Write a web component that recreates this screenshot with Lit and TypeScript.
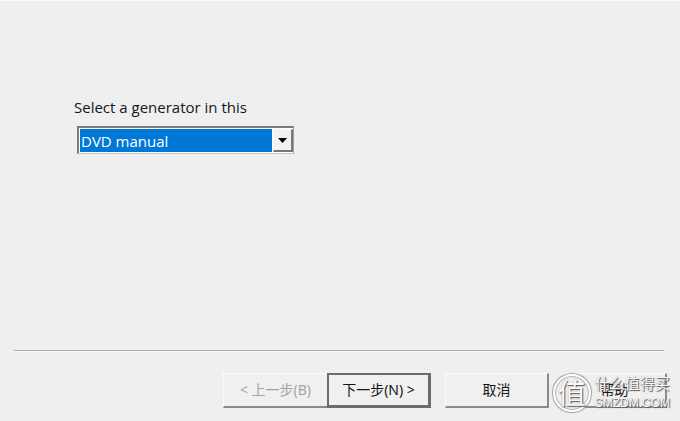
import { LitElement, html, css } from "lit";
import { customElement, state } from "lit/decorators.js";

@customElement("watermark-logo")
class WatermarkLogo extends LitElement {
  static styles = css`
    :host {
      display: flex;
      align-items: center;
      gap: 4px;
      pointer-events: none;
      color: #fafafa;
      font-family: "Noto Sans CJK SC", sans-serif;
      text-shadow: 1px 1px 1px #555, 0 0 1px #999;
    }
    .seal {
      display: flex;
      align-items: center;
      justify-content: center;
      box-sizing: border-box;
      width: 38px;
      height: 38px;
      padding-bottom: 2px;
      border: 2px solid #fdfdfd;
      border-radius: 50%;
      background: #eeeeee;
      box-shadow: 0 0 1px 1px #a0a0a0, inset 0 0 1px 1px #b0b0b0;
      font-size: 28px;
      line-height: 32px;
    }
    .words {
      display: flex;
      flex-direction: column;
    }
    .name {
      font-size: 15px;
      line-height: 20px;
    }
    .site {
      font-family: "Liberation Sans", sans-serif;
      font-size: 12px;
      line-height: 20px;
    }
  `;
  render() {
    return html`
      <span class="seal">值</span>
      <span class="words">
        <span class="name">什么值得买</span>
        <span class="site">SMZDM.COM</span>
      </span>
    `;
  }
}

@customElement("app-root")
class AppRoot extends LitElement {
  static styles = css`
    :host {
      display: flex;
      flex-direction: column;
      box-sizing: border-box;
      min-height: 100vh;
      padding: 0 13px 13px 14px;
      border-top: 1px solid #fbfbfb;
      background: #efefef;
      color: #161616;
      font-family: "Noto Sans", "Noto Sans CJK SC", sans-serif;
      font-size: 14px;
    }
    .content {
      flex: 1;
      display: flex;
      flex-direction: column;
      align-items: flex-start;
      gap: 9px;
      padding: 96px 60px 0;
      font-family: "Open Sans", "Noto Sans CJK SC", sans-serif;
      font-size: 15px;
    }
    label {
      line-height: 20px;
    }
    .combo {
      display: grid;
      grid-template-columns: 1fr 20px;
      box-sizing: border-box;
      width: 217px;
      height: 28px;
      margin-left: 3px;
      padding: 1px 0 1px 1px;
      border: 2px solid #7b7b7b;
      border-right: 1px solid #a0a0a0;
      border-bottom: 1px solid #c8c8c8;
      background: #fff;
    }
    select {
      grid-area: 1 / 1 / 2 / 3;
      appearance: none;
      min-width: 0;
      margin: 0;
      padding: 0 20px 0 1px;
      border: 0;
      border-radius: 0;
      outline: 0;
      background: linear-gradient(#0078d7, #0078d7) no-repeat 0 0 / calc(100% - 21px) 100%;
      color: #fff;
      font: inherit;
    }
    .arrow {
      grid-area: 1 / 2;
      display: flex;
      align-items: center;
      justify-content: center;
      pointer-events: none;
      border: 1px solid #f6f6f6;
      border-right: 2px solid #777;
      border-bottom: 2px solid #777;
      background: #f2f2f2;
    }
    .arrow svg {
      width: 9px;
      height: 5px;
    }
    hr {
      box-sizing: content-box;
      width: calc(100% - 3px);
      height: 1px;
      margin: 0 0 21px;
      border: 0;
      border-top: 1px solid #a6a6a6;
      background: #fafafa;
    }
    .actions {
      position: relative;
      display: flex;
      justify-content: flex-end;
      gap: 14px;
    }
    .pair {
      display: flex;
    }
    button {
      box-sizing: border-box;
      width: 104px;
      height: 35px;
      padding: 0;
      border: 1px solid #fbfbfb;
      border-right: 2px solid #8a8a8a;
      border-bottom: 2px solid #8a8a8a;
      border-radius: 0;
      background: #f0f0f0;
      color: #161616;
      font: inherit;
      line-height: 20px;
    }
    .back {
      border-right-width: 0;
    }
    button:disabled {
      color: #a4a4a4;
    }
    .next {
      border: 2px solid #6c6c6c;
      border-right-width: 3px;
      border-bottom-width: 3px;
    }
    watermark-logo {
      position: absolute;
      right: -3px;
      top: 0;
    }
  `;

  @state() private generator = "DVD manual";

  render() {
    return html`
      <main class="content">
        <label for="generator">Select a generator in this</label>
        <div class="combo">
          <select id="generator" @change=${(e: Event) => (this.generator = (e.target as HTMLSelectElement).value)}>
            <option>${this.generator}</option>
          </select>
          <span class="arrow" aria-hidden="true">
            <svg viewBox="0 0 9 5"><path d="M0 0h9L4.500 5z" fill="#000" /></svg>
          </span>
        </div>
      </main>
      <hr />
      <footer class="actions">
        <div class="pair">
          <button class="back" disabled>&lt; 上一步(B)</button>
          <button class="next">下一步(N) &gt;</button>
        </div>
        <button>取消</button>
        <button>帮助</button>
        <watermark-logo></watermark-logo>
      </footer>
    `;
  }
}
